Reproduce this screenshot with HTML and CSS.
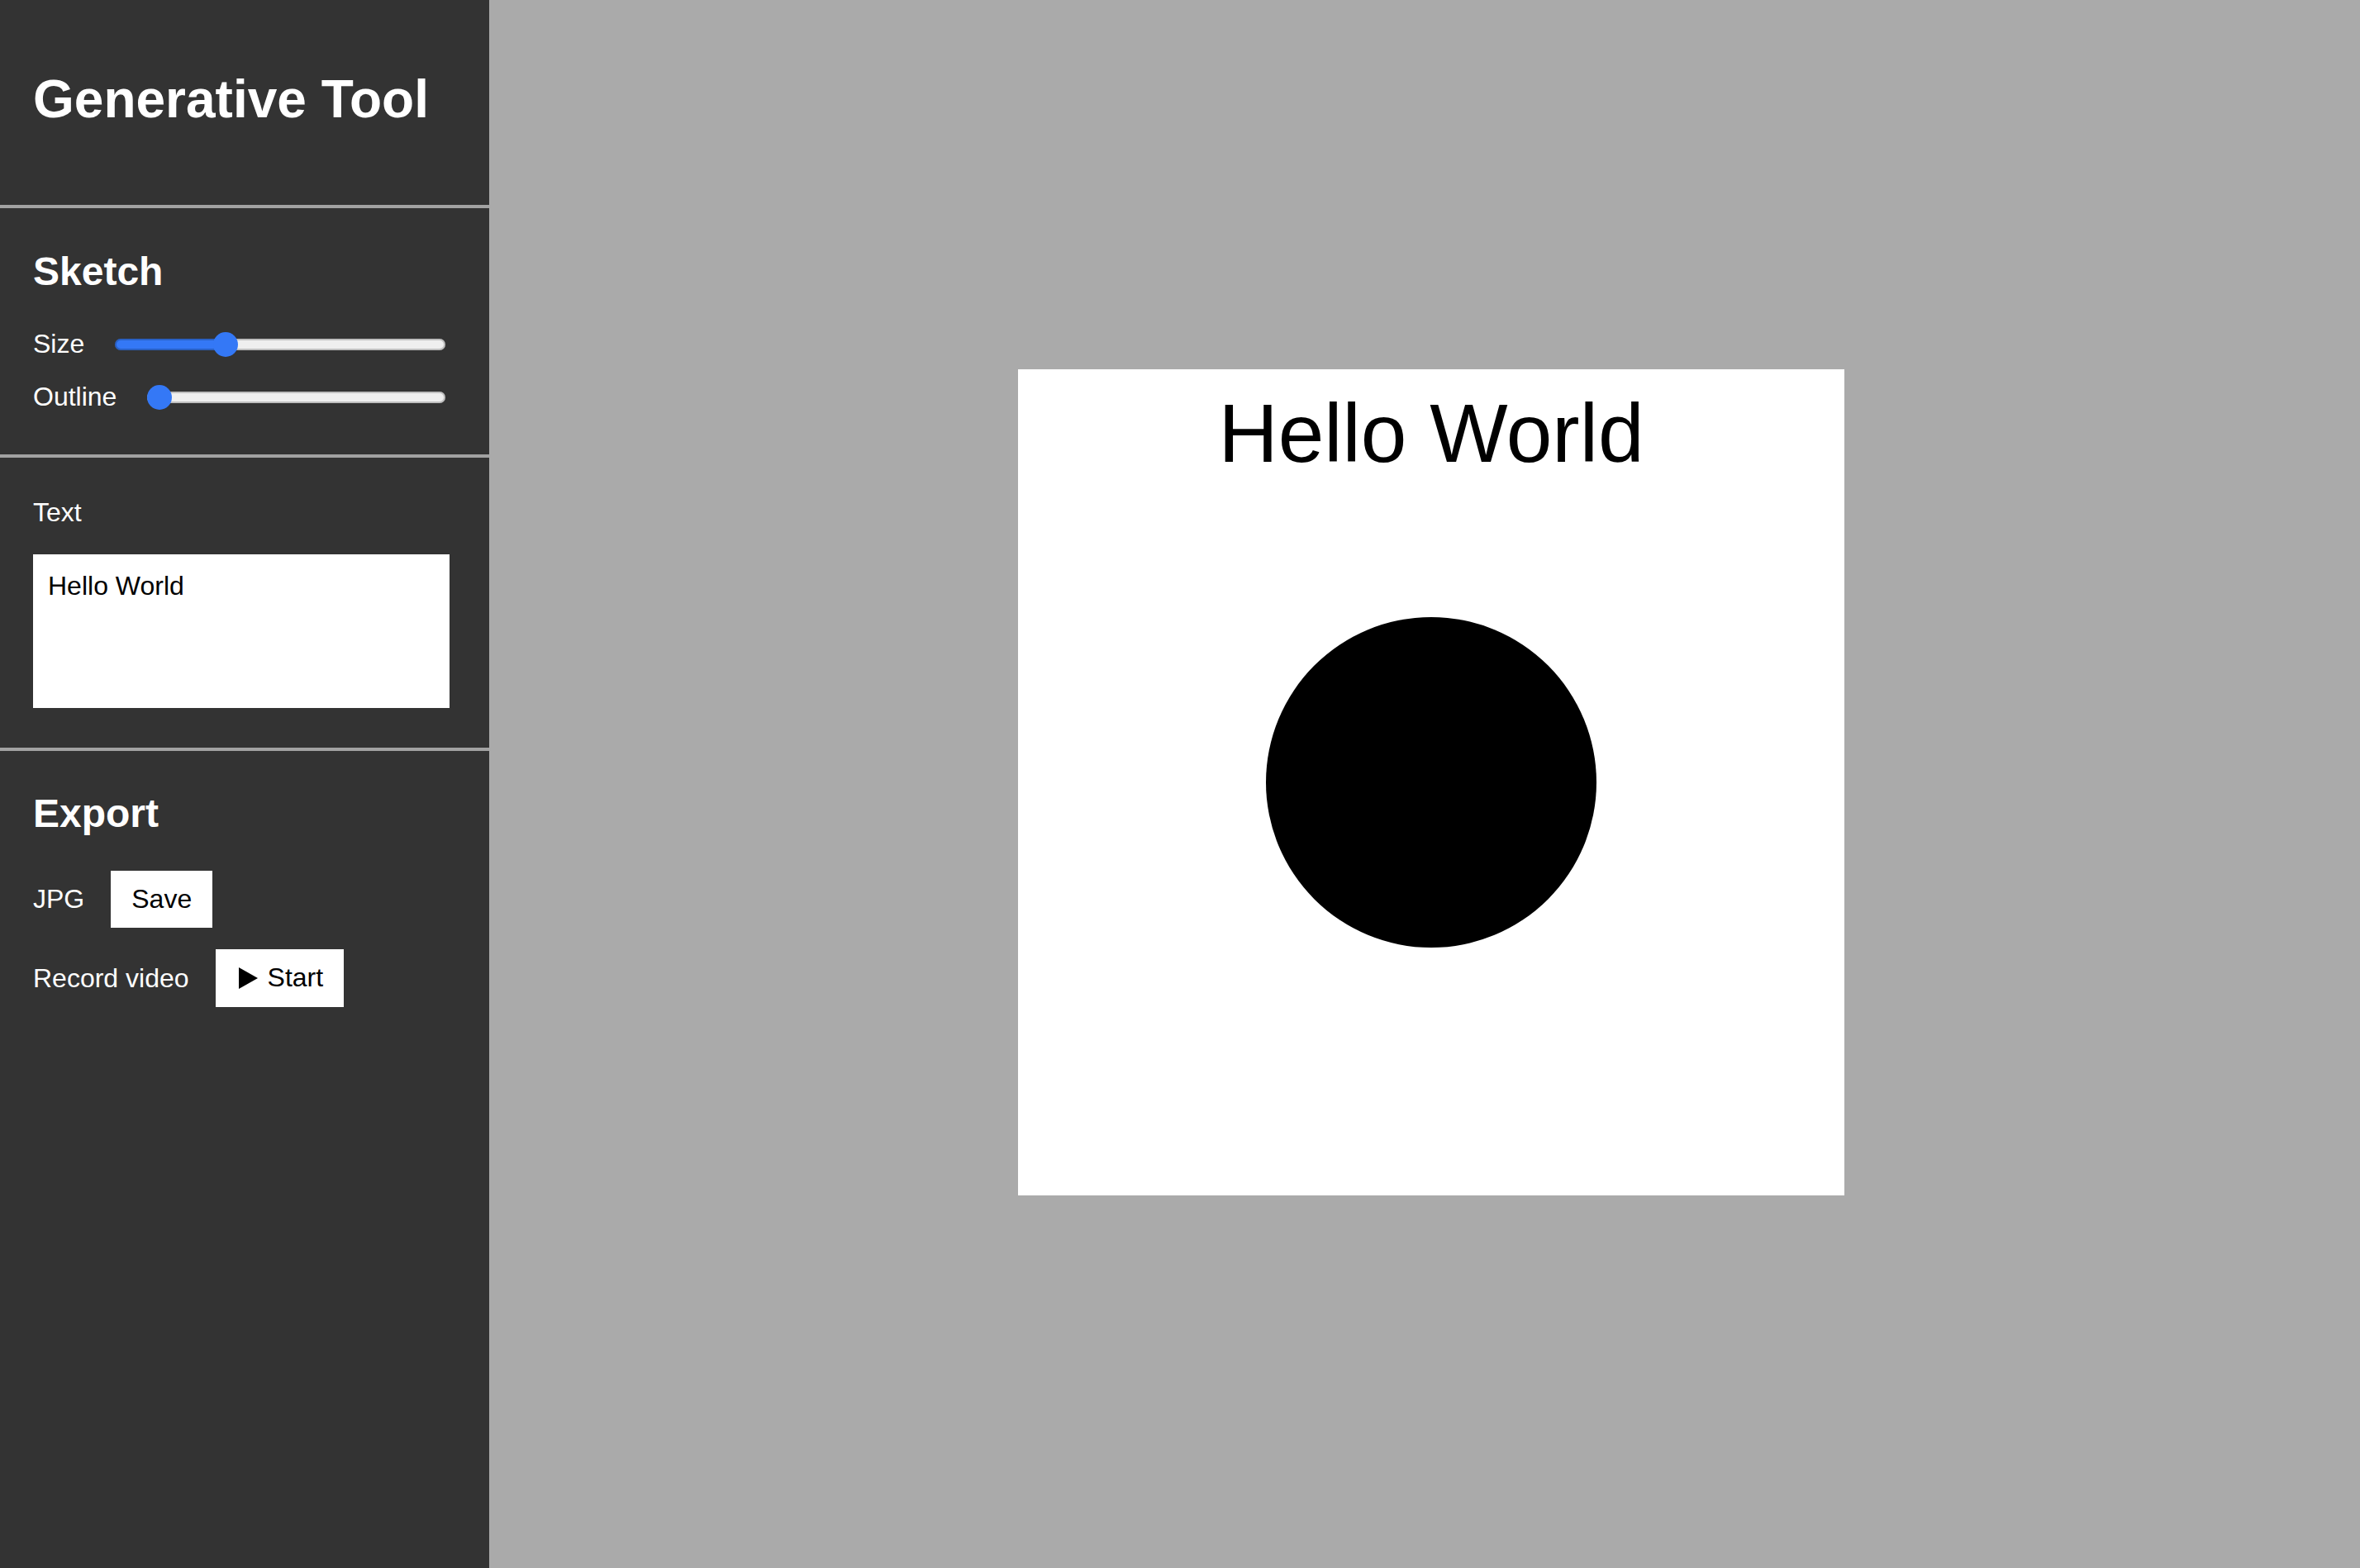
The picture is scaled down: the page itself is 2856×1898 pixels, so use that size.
FILE: index.html
```html
<!DOCTYPE html>
<html lang="en">
<head>
<meta charset="utf-8">
<title>Generative Tool</title>
<link rel="stylesheet" href="styles.css">
</head>
<body>
<div class="app">
  <aside class="sidebar">
    <section class="panel panel-title">
      <h1 class="app-title">Generative Tool</h1>
    </section>
    <section class="panel panel-sketch">
      <h2 class="panel-heading">Sketch</h2>
      <div class="rows slider-rows">
        <label class="slider-row"><span>Size</span><input class="slider" type="range" min="0" max="100" value="32" style="--fill: 33.4%"></label>
        <label class="slider-row"><span>Outline</span><input class="slider" type="range" min="0" max="100" value="0" style="--fill: 0%"></label>
      </div>
    </section>
    <section class="panel panel-text">
      <label class="field-label" for="text-input">Text</label>
      <textarea id="text-input" class="text-input">Hello World</textarea>
    </section>
    <section class="panel panel-export">
      <h2 class="panel-heading">Export</h2>
      <div class="rows export-rows">
        <div class="export-row"><span>JPG</span><button class="btn" type="button">Save</button></div>
        <div class="export-row"><span>Record video</span><button class="btn btn-play" type="button"><svg class="play-icon" viewBox="0 0 23 26" width="23" height="26"><path d="M0 0 L23 13 L0 26 Z"/></svg>Start</button></div>
      </div>
    </section>
  </aside>
  <main class="stage">
    <svg class="canvas" viewBox="0 0 1000 1000" width="1000" height="1000">
      <rect width="1000" height="1000" fill="#ffffff"/>
      <text class="canvas-text" x="500" y="112" text-anchor="middle">Hello World</text>
      <circle cx="500" cy="500" r="200" fill="#000000"/>
    </svg>
  </main>
</div>
</body>
</html>
```

FILE: styles.css
```css
* {
  box-sizing: border-box;
}

html, body {
  margin: 0;
  padding: 0;
  height: 100%;
}

body {
  font-family: "Liberation Sans", Arial, Helvetica, sans-serif;
  background: #aaaaaa;
}

.app {
  display: flex;
  height: 100vh;
}

.sidebar {
  flex: none;
  width: 592px;
  background: #333333;
  color: #ffffff;
  display: flex;
  flex-direction: column;
}

.panel {
  padding: 48px 40px;
  border-bottom: 4px solid #a2a2a2;
}

.panel-title {
  padding: 83px 40px 91px;
}

.panel-sketch {
  padding: 49px 40px 51px;
}

.panel-export {
  border-bottom: none;
  flex: 1;
}

.app-title {
  margin: 0;
  font-size: 64px;
  line-height: 74px;
  font-weight: 700;
}

.panel-heading {
  margin: 0 0 42px;
  font-size: 48px;
  line-height: 55px;
  font-weight: 700;
}

.rows {
  display: flex;
  flex-direction: column;
}

.slider-rows {
  gap: 27px;
}

.export-rows {
  gap: 26px;
}

.slider-row {
  display: flex;
  align-items: center;
  gap: 37px;
  margin-right: 13px;
  font-size: 32px;
  line-height: 37px;
}

.slider {
  -webkit-appearance: none;
  appearance: none;
  flex: 1;
  min-width: 0;
  height: 30px;
  margin: 0;
  padding: 0;
  background: transparent;
}

.slider::-webkit-slider-runnable-track {
  height: 14px;
  border-radius: 7px;
  background: linear-gradient(to right, #3478f6 var(--fill), #efefef var(--fill));
  box-shadow: inset 0 0 0 2px rgba(0, 0, 0, 0.2);
}

.slider::-webkit-slider-thumb {
  -webkit-appearance: none;
  appearance: none;
  width: 30px;
  height: 30px;
  margin-top: -8px;
  border: none;
  border-radius: 50%;
  background: #3478f6;
}

.field-label {
  display: block;
  font-size: 32px;
  line-height: 37px;
  margin-bottom: 32px;
}

.text-input {
  display: block;
  width: 504px;
  height: 186px;
  margin: 0;
  padding: 20px 18px;
  border: none;
  border-radius: 0;
  background: #ffffff;
  color: #000000;
  font-family: "Liberation Sans", Arial, Helvetica, sans-serif;
  font-size: 32px;
  line-height: 37px;
  resize: none;
  outline: none;
}

.export-row {
  display: flex;
  align-items: center;
  gap: 32px;
  font-size: 32px;
  line-height: 37px;
}

.btn {
  display: inline-flex;
  align-items: center;
  margin: 0;
  padding: 16px 25px;
  border: none;
  border-radius: 0;
  background: #ffffff;
  color: #000000;
  font-family: "Liberation Sans", Arial, Helvetica, sans-serif;
  font-size: 32px;
  line-height: 37px;
}

.btn-play {
  padding: 16px 25px 17px 28px;
}

.play-icon {
  display: block;
  margin-right: 12px;
  fill: #000000;
}

.stage {
  flex: 1;
  display: flex;
  align-items: center;
  justify-content: center;
  padding: 0 0 4px 16px;
  background: #aaaaaa;
}

.canvas {
  display: block;
  flex: none;
}

.canvas-text {
  font-family: "Liberation Sans", Arial, Helvetica, sans-serif;
  font-size: 100px;
  fill: #000000;
}
```
